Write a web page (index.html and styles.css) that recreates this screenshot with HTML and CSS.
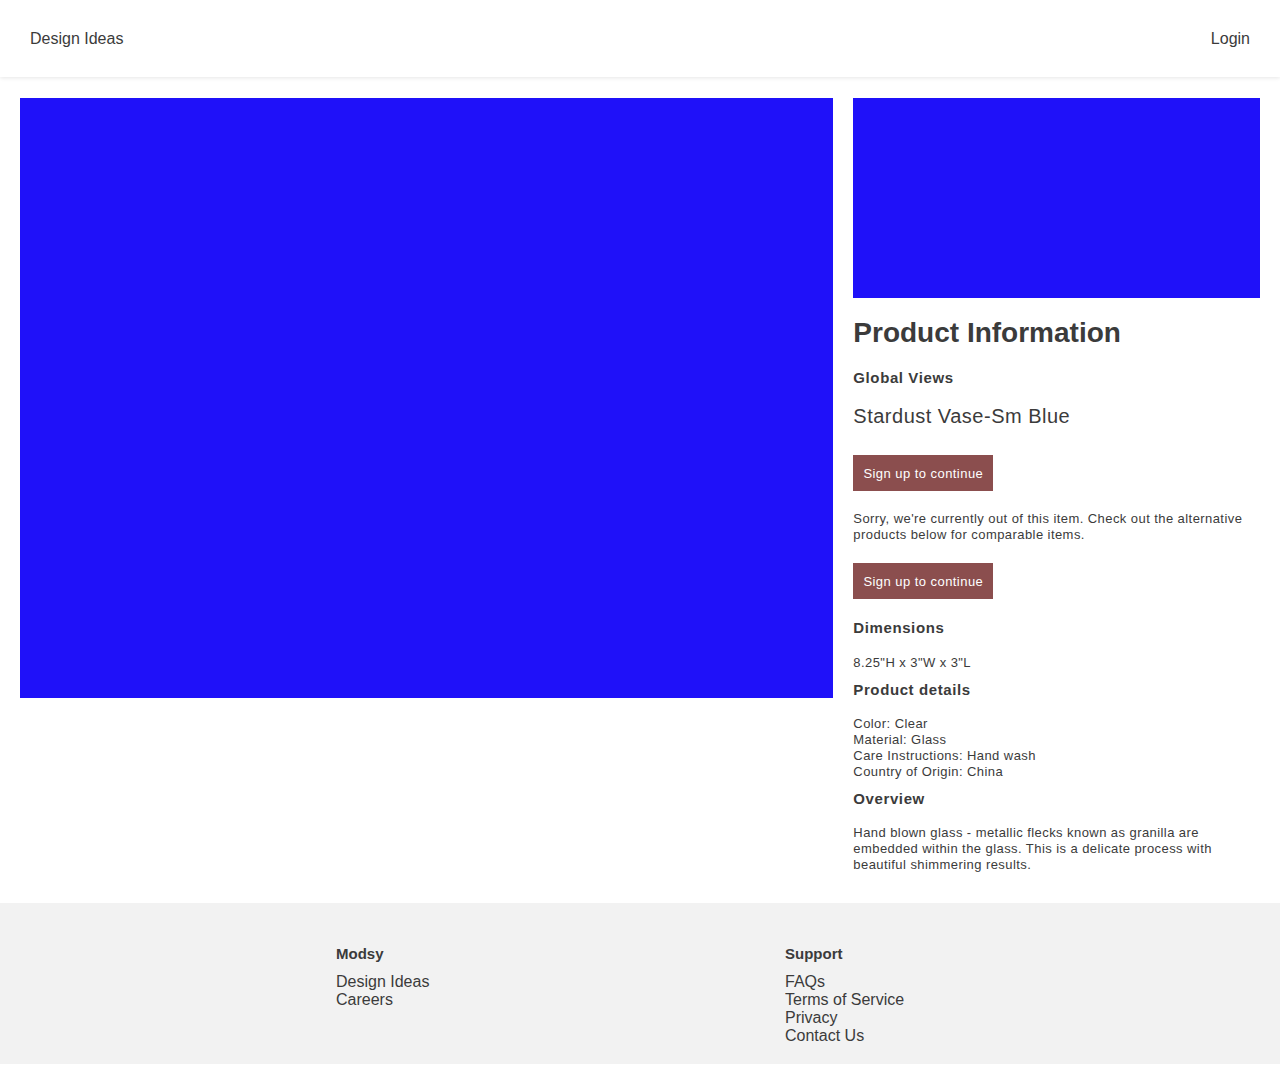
FILE: index.html
```html
<!DOCTYPE html>
<html lang="en">
<head>
<meta charset="utf-8">
<title>Stardust Vase-Sm Blue</title>
<link rel="stylesheet" href="styles.css">
</head>
<body>
<header class="topbar">
  <a class="nav-link" href="#">Design Ideas</a>
  <a class="nav-link" href="#">Login</a>
</header>
<main class="product">
  <div class="hero-image"></div>
  <aside class="info">
    <div class="thumb-image"></div>
    <h1 class="title">Product Information</h1>
    <div class="brand">Global Views</div>
    <div class="name">Stardust Vase-Sm Blue</div>
    <button class="cta cta-first">Sign up to continue</button>
    <p class="note">Sorry, we're currently out of this item. Check out the alternative products below for comparable items.</p>
    <button class="cta">Sign up to continue</button>
    <h3 class="section-title first">Dimensions</h3>
    <p class="small dims">8.25"H x 3"W x 3"L</p>
    <h3 class="section-title">Product details</h3>
    <p class="small">Color: Clear<br>Material: Glass<br>Care Instructions: Hand wash<br>Country of Origin: China</p>
    <h3 class="section-title">Overview</h3>
    <p class="small">Hand blown glass - metallic flecks known as granilla are embedded within the glass. This is a delicate process with beautiful shimmering results.</p>
  </aside>
</main>
<footer class="footer">
  <div class="footer-inner">
    <div class="footer-col">
      <div class="footer-head">Modsy</div>
      <a href="#">Design Ideas</a>
      <a href="#">Careers</a>
    </div>
    <div class="footer-col">
      <div class="footer-head">Support</div>
      <a href="#">FAQs</a>
      <a href="#">Terms of Service</a>
      <a href="#">Privacy</a>
      <a href="#">Contact Us</a>
    </div>
  </div>
</footer>
</body>
</html>
```
FILE: styles.css
```css
* { box-sizing: border-box; }
html, body { margin: 0; padding: 0; }
body {
  font-family: "Liberation Sans", Arial, sans-serif;
  color: #3b3b3b;
  background: #fff;
}
a { color: inherit; text-decoration: none; }

.topbar {
  height: 77px;
  display: flex;
  align-items: center;
  justify-content: space-between;
  padding: 0 30px;
  font-size: 16px;
  background: #fff;
  box-shadow: 0 1px 4px rgba(0,0,0,0.1);
  position: relative;
}

.product {
  display: flex;
  align-items: flex-start;
  gap: 20px;
  padding: 21px 20px 30px;
}
.hero-image {
  flex: 2 1 0;
  height: 600px;
  background: #1f11f9;
}
.info {
  flex: 1 1 0;
  min-width: 0;
}
.thumb-image {
  height: 200px;
  background: #1f11f9;
}
.title {
  font-size: 28px;
  line-height: 32px;
  font-weight: bold;
  margin: 19px 0 0;
}
.brand {
  font-size: 15px;
  line-height: 18px;
  font-weight: bold;
  letter-spacing: 0.6px;
  margin-top: 20px;
}
.name {
  font-size: 20px;
  line-height: 24px;
  letter-spacing: 0.5px;
  margin-top: 17px;
}
.cta {
  display: block;
  width: 140px;
  height: 36px;
  border: 0;
  background: #8b4e4e;
  color: #fff;
  font-family: "Liberation Sans", Arial, sans-serif;
  font-size: 13px;
  letter-spacing: 0.45px;
  padding: 0;
  margin: 0;
}
.cta-first { margin-top: 27px; }
.note {
  font-size: 13px;
  line-height: 16px;
  letter-spacing: 0.43px;
  margin: 20px 0 20px;
}
.section-title {
  font-size: 15px;
  line-height: 18px;
  font-weight: bold;
  letter-spacing: 0.6px;
  margin: 10px 0 0;
}
.section-title.first { margin-top: 20px; }
.small {
  font-size: 13px;
  line-height: 16px;
  letter-spacing: 0.43px;
  margin: 17px 0 0;
}
.small.dims { margin-top: 18px; }

.footer {
  background: #f2f2f2;
  padding: 42px 0 19px;
}
.footer-inner {
  width: 608px;
  margin: 0 auto;
  display: grid;
  grid-template-columns: 449px 1fr;
}
.footer-col {
  display: flex;
  flex-direction: column;
  font-size: 16px;
  line-height: 18px;
}
.footer-head {
  font-size: 15px;
  font-weight: bold;
  line-height: 18px;
  margin-bottom: 10px;
}
```
